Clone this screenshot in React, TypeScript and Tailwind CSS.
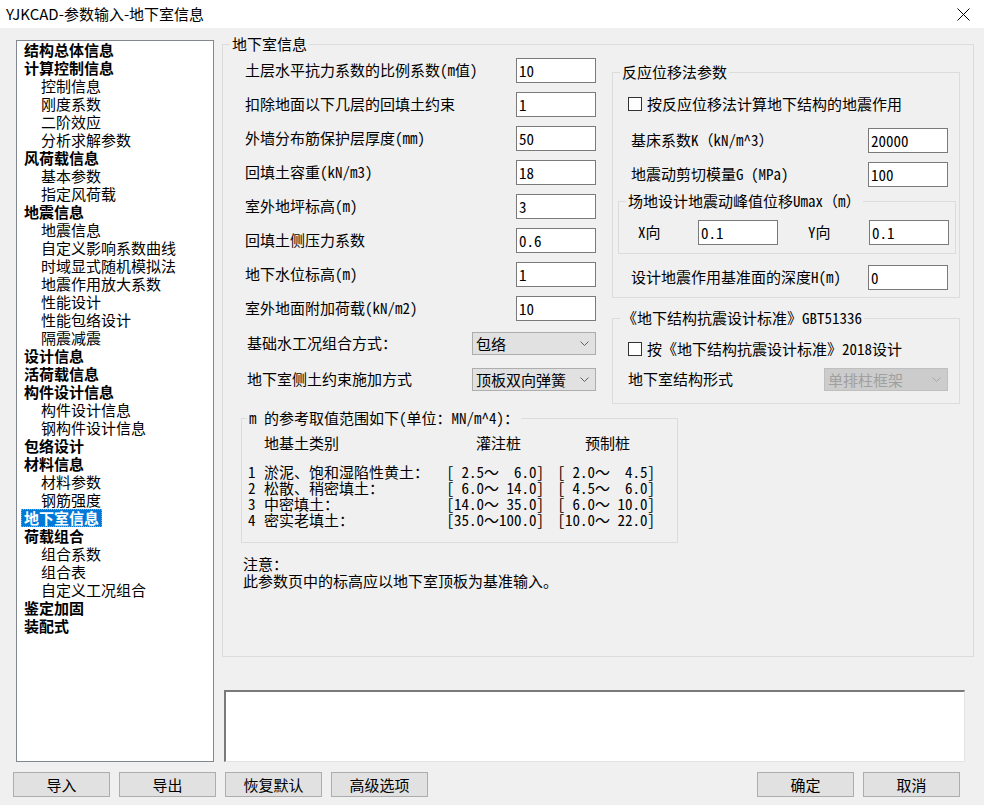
import React from 'react'

type TreeItem = { text: string; bold?: boolean; selected?: boolean }

const treeItems: TreeItem[] = [
  { text: '结构总体信息', bold: true },
  { text: '计算控制信息', bold: true },
  { text: '控制信息' },
  { text: '刚度系数' },
  { text: '二阶效应' },
  { text: '分析求解参数' },
  { text: '风荷载信息', bold: true },
  { text: '基本参数' },
  { text: '指定风荷载' },
  { text: '地震信息', bold: true },
  { text: '地震信息' },
  { text: '自定义影响系数曲线' },
  { text: '时域显式随机模拟法' },
  { text: '地震作用放大系数' },
  { text: '性能设计' },
  { text: '性能包络设计' },
  { text: '隔震减震' },
  { text: '设计信息', bold: true },
  { text: '活荷载信息', bold: true },
  { text: '构件设计信息', bold: true },
  { text: '构件设计信息' },
  { text: '钢构件设计信息' },
  { text: '包络设计', bold: true },
  { text: '材料信息', bold: true },
  { text: '材料参数' },
  { text: '钢筋强度' },
  { text: '地下室信息', bold: true, selected: true },
  { text: '荷载组合', bold: true },
  { text: '组合系数' },
  { text: '组合表' },
  { text: '自定义工况组合' },
  { text: '鉴定加固', bold: true },
  { text: '装配式', bold: true },
]

const inputRows = [
  ['土层水平抗力系数的比例系数(m值)', '10'],
  ['扣除地面以下几层的回填土约束', '1'],
  ['外墙分布筋保护层厚度(mm)', '50'],
  ['回填土容重(kN/m3)', '18'],
  ['室外地坪标高(m)', '3'],
  ['回填土侧压力系数', '0.6'],
  ['地下水位标高(m)', '1'],
  ['室外地面附加荷载(kN/m2)', '10'],
]

const soilRows = [
  ['1', '淤泥、饱和湿陷性黄土：', '[ 2.5～  6.0]', '[ 2.0～  4.5]'],
  ['2', '松散、稍密填土：', '[ 6.0～ 14.0]', '[ 4.5～  6.0]'],
  ['3', '中密填土：', '[14.0～ 35.0]', '[ 6.0～ 10.0]'],
  ['4', '密实老填土：', '[35.0～100.0]', '[10.0～ 22.0]'],
]

function Field({ value }: { value: string }) {
  return (
    <input
      readOnly
      defaultValue={value}
      className="h-[25px] w-[80px] shrink-0 border border-[#7a7a7a] bg-white px-[2px] text-[15px] leading-[23px] text-black outline-none"
    />
  )
}

function Chevron({ color = '#606060' }: { color?: string }) {
  return (
    <svg width="9" height="5" viewBox="0 0 9 5" className="shrink-0">
      <path d="M0.5 0.5 L4.5 4.5 L8.5 0.5" fill="none" stroke={color} strokeWidth="1" />
    </svg>
  )
}

function Select({ value, disabled }: { value: string; disabled?: boolean }) {
  return (
    <div
      className={`flex h-[23px] w-[124px] shrink-0 items-center justify-between border pl-[3px] pr-[6px] text-[15px] leading-[21px] ${
        disabled ? 'border-[#bfbfbf] bg-[#cccccc] text-[#a0a0a0]' : 'border-[#adadad] bg-[#e1e1e1] text-black'
      }`}
    >
      <span>{value}</span>
      <Chevron color={disabled ? '#a8a8a8' : '#606060'} />
    </div>
  )
}

function CheckBox() {
  return <span className="block h-[14px] w-[14px] shrink-0 border border-[#333333] bg-white" />
}

function Button({ text }: { text: string }) {
  return (
    <button className="h-[25px] w-[97px] border border-[#adadad] bg-[#e1e1e1] text-[15px] leading-[23px] text-black">
      {text}
    </button>
  )
}

export default function App() {
  return (
    <div className="flex h-[805px] w-[984px] flex-col overflow-hidden bg-[#f0f0f0] font-['Noto_Sans_Mono_CJK_SC','Noto_Sans_CJK_SC',sans-serif] text-[15px] text-black">
      {/* title bar */}
      <div className="flex h-[28px] shrink-0 items-center bg-white font-['Noto_Sans_CJK_SC',sans-serif]">
        <span className="pl-[6px] text-[15px]">YJKCAD-参数输入-地下室信息</span>
        <svg width="13" height="13" viewBox="0 0 13 13" className="ml-auto mr-[14px]">
          <path d="M0.5 0.5 L12.5 12.5 M12.5 0.5 L0.5 12.5" stroke="#000" strokeWidth="1" />
        </svg>
      </div>

      <div className="flex">
        {/* tree */}
        <div className="ml-[16px] mt-[12px] h-[722px] w-[198px] shrink-0 border border-[#828790] bg-white">
          {treeItems.map((item, i) => (
            <div
              key={i}
              className={`h-[18px] whitespace-nowrap leading-[18px] ${item.bold ? 'pl-[7px] font-bold' : 'pl-[24px]'}`}
            >
              {item.selected ? (
                <span className="-ml-[3px] inline-block h-[18px] border border-dotted border-[#e8953a] bg-[#0078d7] px-[2px] leading-[16px] text-white">
                  {item.text}
                </span>
              ) : (
                item.text
              )}
            </div>
          ))}
        </div>

        <div className="ml-[8px] flex flex-col">
          {/* main group */}
          <fieldset className="mt-[7px] h-[622px] w-[752px] border border-[#dcdcdc]">
            <legend className="ml-[7px] px-[2px] leading-[18px]">地下室信息</legend>
            <div className="pl-[18px]">
              <div className="flex items-start">
                {/* left column */}
                <div className="flex w-[371px] shrink-0 flex-col pt-[5px]">
                  <div className="flex flex-col gap-[9px]">
                    {inputRows.map(([label, value]) => (
                      <div key={label} className="flex items-center">
                        <span className="w-[275px] whitespace-nowrap pl-[4px]">{label}</span>
                        <Field value={value} />
                      </div>
                    ))}
                  </div>
                  <div className="mt-[11px] flex flex-col gap-[13px]">
                    <div className="flex items-center">
                      <span className="w-[231px] pl-[6px]">基础水工况组合方式：</span>
                      <Select value="包络" />
                    </div>
                    <div className="flex items-center">
                      <span className="w-[231px] pl-[6px]">地下室侧土约束施加方式</span>
                      <Select value="顶板双向弹簧" />
                    </div>
                  </div>
                </div>

                {/* right column */}
                <div className="flex w-[348px] shrink-0 flex-col pt-[10px]">
                  <fieldset className="border border-[#dcdcdc]">
                    <legend className="ml-[7px] px-[2px] leading-[18px]">反应位移法参数</legend>
                    <div className="flex flex-col pb-[7px] pt-[13px]">
                      <div className="flex h-[20px] items-center gap-[5px] pl-[15px]">
                        <CheckBox />
                        <span>按反应位移法计算地下结构的地震作用</span>
                      </div>
                      <div className="mt-[14px] flex items-center justify-between pl-[18px] pr-[11px]">
                        <span>基床系数K（kN/m^3）</span>
                        <Field value="20000" />
                      </div>
                      <div className="mt-[9px] flex items-center justify-between pl-[18px] pr-[11px]">
                        <span>地震动剪切模量G (MPa)</span>
                        <Field value="100" />
                      </div>
                      <fieldset className="ml-[5px] mr-[3px] mt-[5px] border border-[#dcdcdc]">
                        <legend className="ml-[7px] px-[2px] leading-[18px]">场地设计地震动峰值位移Umax（m）</legend>
                        <div className="flex items-center pb-[8px] pl-[19px] pt-[10px]">
                          <span className="w-[60px]">X向</span>
                          <Field value="0.1" />
                          <span className="ml-[30px] w-[61px]">Y向</span>
                          <Field value="0.1" />
                        </div>
                      </fieldset>
                      <div className="mt-[11px] flex items-center justify-between pl-[18px] pr-[11px]">
                        <span>设计地震作用基准面的深度H(m)</span>
                        <Field value="0" />
                      </div>
                    </div>
                  </fieldset>

                  <fieldset className="mt-[11px] border border-[#dcdcdc]">
                    <legend className="ml-[7px] px-[2px] leading-[18px]">《地下结构抗震设计标准》GBT51336</legend>
                    <div className="flex flex-col pb-[12px] pt-[12px]">
                      <div className="flex h-[20px] items-center gap-[5px] pl-[15px]">
                        <CheckBox />
                        <span>按《地下结构抗震设计标准》2018设计</span>
                      </div>
                      <div className="mt-[9px] flex items-center justify-between pl-[15px] pr-[11px]">
                        <span>地下室结构形式</span>
                        <Select value="单排柱框架" disabled />
                      </div>
                    </div>
                  </fieldset>
                </div>
              </div>

              {/* m reference table */}
              <fieldset className="mt-[5px] w-[437px] border border-[#dcdcdc]">
                <legend className="ml-[5px] px-[2px] leading-[18px]">m 的参考取值范围如下(单位：MN/m^4)：</legend>
                <div className="pb-[14px] pt-[7px]">
                  <div className="flex h-[18px] items-center pl-[22px]">
                    <span className="w-[212px]">地基土类别</span>
                    <span className="w-[109px]">灌注桩</span>
                    <span>预制桩</span>
                  </div>
                  <div className="mt-[12px] flex flex-col pl-[6px]">
                    {soilRows.map(([n, name, a, b]) => (
                      <div key={n} className="flex h-[16px] items-center whitespace-pre leading-[16px]">
                        <span className="w-[16px]">{n}</span>
                        <span className="w-[172px]">{name}</span>
                        <span className="w-[108px] text-right">{a}</span>
                        <span className="w-[111px] text-right">{b}</span>
                      </div>
                    ))}
                  </div>
                </div>
              </fieldset>

              <div className="mt-[12px] pl-[2px] leading-[17px]">
                <div>注意：</div>
                <div>此参数页中的标高应以地下室顶板为基准输入。</div>
              </div>
            </div>
          </fieldset>

          {/* message box */}
          <div className="ml-[2px] mt-[33px] h-[72px] w-[741px] border-b border-l-2 border-r border-t-2 border-b-[#e3e3e3] border-l-[#7a7a7a] border-r-[#e3e3e3] border-t-[#7a7a7a] bg-white" />
        </div>
      </div>

      {/* buttons */}
      <div className="mt-[10px] flex pl-[13px] pr-[24px]">
        <div className="flex gap-[9px]">
          <Button text="导入" />
          <Button text="导出" />
          <Button text="恢复默认" />
          <Button text="高级选项" />
        </div>
        <div className="ml-auto flex gap-[9px]">
          <Button text="确定" />
          <Button text="取消" />
        </div>
      </div>
    </div>
  )
}
